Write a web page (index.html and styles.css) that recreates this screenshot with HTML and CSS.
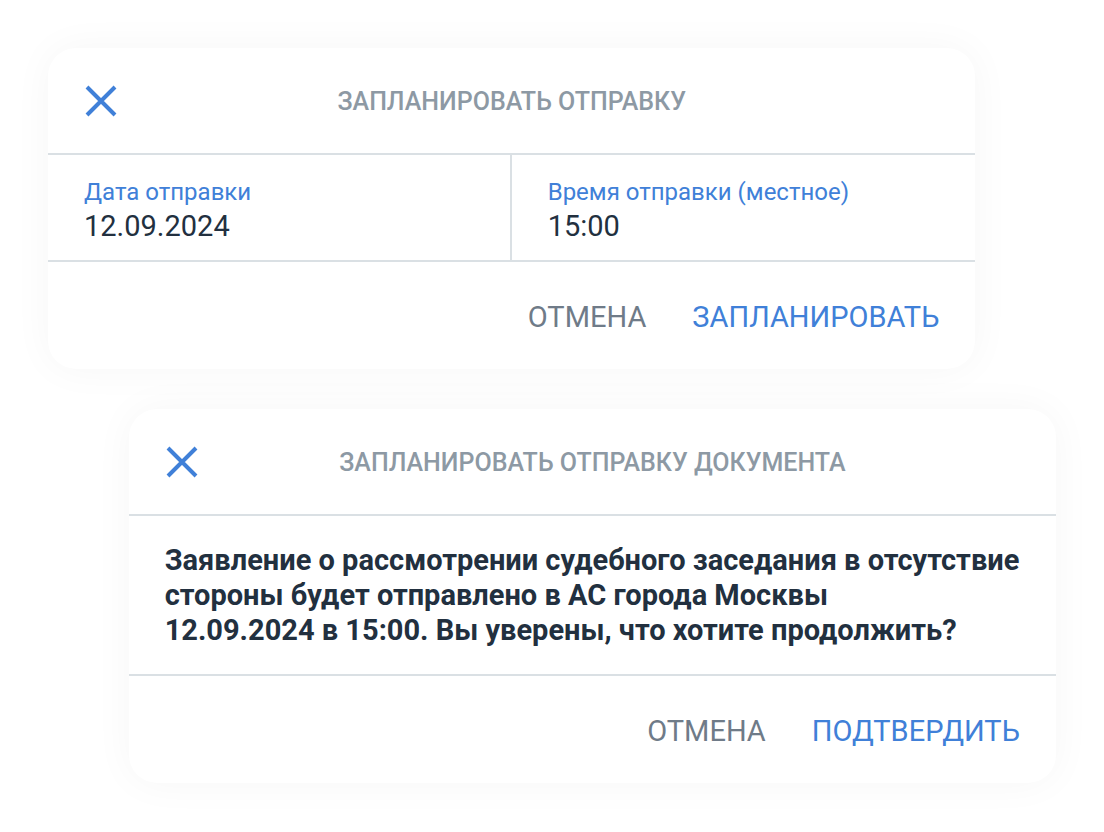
FILE: index.html
```html
<!DOCTYPE html>
<html lang="ru">
<head>
    <meta charset="UTF-8">
    <meta name="viewport" content="width=device-width, initial-scale=1.0">
    <title>Запланировать отправку</title>
    <link rel="stylesheet" href="styles.css">
</head>
<body>

<main class="dialogs">

    <!-- Выбор даты и времени -->
    <section class="dialog" role="dialog" aria-labelledby="schedule-title">
        <header class="dialog-header">
            <button type="button" class="close" aria-label="Закрыть">
                <svg viewBox="0 0 32 32" aria-hidden="true"><path d="M2 2L30 30M30 2L2 30"/></svg>
            </button>
            <h2 id="schedule-title">ЗАПЛАНИРОВАТЬ ОТПРАВКУ</h2>
        </header>
        <div class="fields">
            <div class="field">
                <label for="send-date">Дата отправки</label>
                <input type="text" id="send-date" value="12.09.2024">
            </div>
            <div class="field">
                <label for="send-time">Время отправки (местное)</label>
                <input type="text" id="send-time" value="15:00">
            </div>
        </div>
        <footer class="actions">
            <button type="button">ОТМЕНА</button>
            <button type="button" class="primary">ЗАПЛАНИРОВАТЬ</button>
        </footer>
    </section>

    <!-- Подтверждение -->
    <section class="dialog dialog-confirm" role="dialog" aria-labelledby="confirm-title">
        <header class="dialog-header">
            <button type="button" class="close" aria-label="Закрыть">
                <svg viewBox="0 0 32 32" aria-hidden="true"><path d="M2 2L30 30M30 2L2 30"/></svg>
            </button>
            <h2 id="confirm-title">ЗАПЛАНИРОВАТЬ ОТПРАВКУ ДОКУМЕНТА</h2>
        </header>
        <p class="message">Заявление о рассмотрении судебного заседания в отсутствие стороны будет отправлено в АС города Москвы<br>12.09.2024 в 15:00. Вы уверены, что хотите продолжить?</p>
        <footer class="actions">
            <button type="button">ОТМЕНА</button>
            <button type="button" class="primary">ПОДТВЕРДИТЬ</button>
        </footer>
    </section>

</main>

</body>
</html>
```
FILE: styles.css
```css
* {
    margin: 0;
    padding: 0;
    box-sizing: border-box;
}

body {
    font-family: Roboto, 'Liberation Sans', sans-serif;
    background-color: #fff;
    color: #22303f;
}

.dialogs {
    display: flex;
    flex-direction: column;
    gap: 40px;
    padding: 48px;
}

.dialog {
    width: 92%;
    background-color: #fff;
    border-radius: 28px;
    box-shadow: 0 0 40px rgba(0, 0, 0, 0.04);
}

.dialog-confirm {
    align-self: flex-end;
}

.dialog-header {
    display: grid;
    grid-template-columns: 32px 1fr 32px;
    align-items: start;
    padding: 37px 37px 34px;
    border-bottom: 2px solid #dae0e4;
}

.dialog-header h2 {
    font-size: 25px;
    font-weight: 500;
    line-height: 34px;
    text-align: center;
    color: #8d99a4;
}

button {
    border: none;
    background: none;
    font-family: inherit;
    cursor: pointer;
}

.close {
    width: 32px;
    height: 32px;
}

.close svg {
    display: block;
    fill: none;
    stroke: #4080d8;
    stroke-width: 4;
}

.fields {
    display: grid;
    grid-template-columns: 1fr 1fr;
    border-bottom: 2px solid #dae0e4;
}

.field {
    padding: 20px 36px 16px;
}

.field:first-child {
    border-right: 2px solid #dae0e4;
}

.field label {
    display: block;
    font-size: 24px;
    line-height: 34px;
    color: #4080d8;
}

.field input {
    display: block;
    width: 100%;
    height: 35px;
    border: none;
    outline: none;
    background: none;
    font-family: inherit;
    font-size: 29px;
    line-height: 35px;
    color: #22303f;
}

.message {
    padding: 27px 24px 26px 36px;
    border-bottom: 2px solid #dae0e4;
    font-size: 29px;
    font-weight: 700;
    line-height: 35px;
}

.actions {
    display: flex;
    justify-content: flex-end;
    gap: 46px;
    padding: 38px 36px 34px;
}

.actions button {
    font-size: 29px;
    line-height: 35px;
    color: #6f7b88;
}

.actions .primary {
    color: #4080d8;
}
```
